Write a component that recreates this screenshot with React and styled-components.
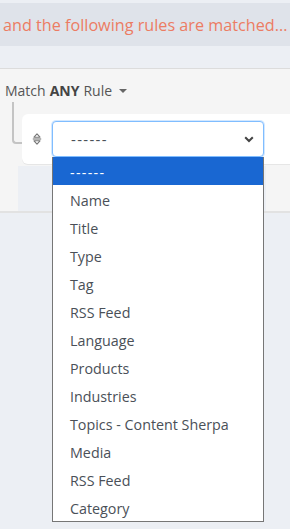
import React from 'react'
import styled, { createGlobalStyle } from 'styled-components'

const GlobalStyle = createGlobalStyle`
  html, body {
    margin: 0;
    padding: 0;
    background: #eceff4;
    font-family: 'Open Sans', 'Noto Sans', sans-serif;
  }
`

const Page = styled.div`
  width: 290px;
  height: 529px;
  overflow: hidden;
  position: relative;
  background: #eceff4;
`

const Banner = styled.div`
  margin-top: 3px;
  height: 43px;
  background: #dfe3ea;
  color: #ec7c63;
  font-size: 16.2px;
  line-height: 44px;
  padding-left: 3px;
  white-space: nowrap;
`

const Spacer = styled.div`
  height: 22px;
`

const Panel = styled.div`
  background: #f5f5f5;
  border-top: 1px solid #dcdcdc;
  border-bottom: 2px solid #e2e2e2;
  height: 145px;
  padding-top: 12px;
  box-sizing: border-box;
`

const MatchLine = styled.div`
  display: flex;
  align-items: center;
  gap: 4px;
  padding-left: 5px;
  font-size: 14px;
  color: #555;
  b {
    color: #444;
    margin: 0 4px;
  }
`

const Caret = styled.span`
  display: inline-block;
  width: 0;
  height: 0;
  margin-left: 3px;
  border-left: 4px solid transparent;
  border-right: 4px solid transparent;
  border-top: 4px solid #666;
`

const Body = styled.div`
  display: flex;
  margin-top: 2px;
`

const Connector = styled.div`
  width: 8px;
  height: 40px;
  margin-left: 12px;
  border-left: 2px solid #c4c4c4;
  border-bottom: 2px solid #c4c4c4;
  border-bottom-left-radius: 4px;
`

const Column = styled.div`
  flex: 1;
  display: flex;
  flex-direction: column;
  margin-top: 12px;
`

const RuleCard = styled.div`
  background: #fff;
  border-radius: 6px 0 0 6px;
  height: 50px;
  display: flex;
  align-items: center;
  padding-left: 10px;
  gap: 10px;
  box-shadow: 0 1px 0 #e6e6e6;
`

const Under = styled.div`
  height: 45px;
  margin-left: -4px;
  margin-right: 24px;
  background: #eceff4;
  margin-top: 2px;
`

const SortIcon = styled.svg`
  width: 10px;
  height: 14px;
  flex: none;
`

const SelectBox = styled.div`
  width: 212px;
  height: 36px;
  box-sizing: border-box;
  border: 1px solid #80bdff;
  border-radius: 4px;
  box-shadow: 0 0 0 1px rgba(128, 189, 255, 0.35);
  background: #fff;
  display: flex;
  align-items: center;
  justify-content: space-between;
  padding: 0 9px 0 18px;
  font-size: 15px;
  color: #495057;
`

const Dashes = styled.span`
  letter-spacing: 1.3px;
`

const List = styled.div`
  position: absolute;
  left: 52px;
  top: 157px;
  width: 212px;
  box-sizing: border-box;
  border: 1px solid #767676;
  border-top: none;
  background: #fff;
`

const Option = styled.div`
  height: 28px;
  box-sizing: border-box;
  padding-top: 3px;
  line-height: 25px;
  padding-left: 17px;
  font-size: 14.3px;
  color: ${(props) => (props.$active ? '#fff' : '#4a5058')};
  background: ${(props) => (props.$active ? '#1967d2' : '#fff')};
  white-space: nowrap;
`

const options = [
  '------',
  'Name',
  'Title',
  'Type',
  'Tag',
  'RSS Feed',
  'Language',
  'Products',
  'Industries',
  'Topics - Content Sherpa',
  'Media',
  'RSS Feed',
  'Category',
]

export default function App() {
  return (
    <Page>
      <GlobalStyle />
      <Banner>and the following rules are matched...</Banner>
      <Spacer />
      <Panel>
        <MatchLine>
          <span>
            Match<b>ANY</b>Rule
          </span>
          <Caret />
        </MatchLine>
        <Body>
          <Connector />
          <Column>
            <RuleCard>
              <SortIcon viewBox='0 0 10 14'>
                <path d='M2 5.2 L5 1.8 L8 5.2 Z M2 8.8 L5 12.2 L8 8.8 Z' fill='none' stroke='#777' strokeWidth='1.1' strokeLinejoin='round' />
                <path d='M0.8 7 H9.2' stroke='#777' strokeWidth='1.1' />
              </SortIcon>
              <SelectBox>
                <Dashes>------</Dashes>
                <svg width='10' height='7' viewBox='0 0 10 7'>
                  <path d='M1.2 1.2 L5 5 L8.8 1.2' fill='none' stroke='#444' strokeWidth='2' />
                </svg>
              </SelectBox>
            </RuleCard>
            <Under />
          </Column>
        </Body>
      </Panel>
      <List>
        {options.map((o, i) => (
          <Option key={i} $active={i === 0}>
            {i === 0 ? <Dashes>{o}</Dashes> : o}
          </Option>
        ))}
      </List>
    </Page>
  )
}
